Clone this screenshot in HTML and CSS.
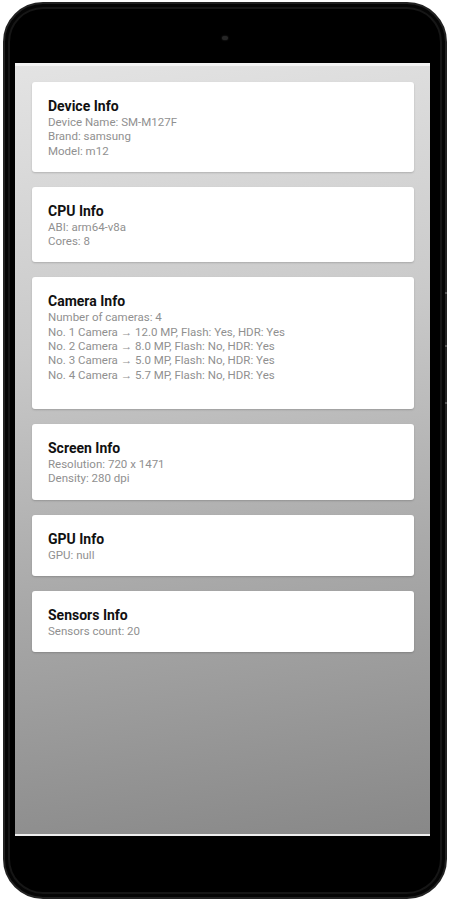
FILE: index.html
```html
<!DOCTYPE html>
<html>
<head>
<meta charset="utf-8">
<link rel="stylesheet" href="styles.css">
</head>
<body>
<div class="phone">
  <div class="bezel-top"><span class="camera"></span></div>
  <span class="btn btn-a"></span>
  <span class="btn btn-b"></span>
  <span class="btn btn-c"></span>
  <div class="screen">
    <div class="card">
      <div class="title">Device Info</div>
      <div class="line">Device Name: SM-M127F</div>
      <div class="line">Brand: samsung</div>
      <div class="line">Model: m12</div>
    </div>
    <div class="card">
      <div class="title">CPU Info</div>
      <div class="line">ABI: arm64-v8a</div>
      <div class="line">Cores: 8</div>
    </div>
    <div class="card card-tall">
      <div class="title">Camera Info</div>
      <div class="line">Number of cameras: 4</div>
      <div class="line">No. 1 Camera → 12.0 MP, Flash: Yes, HDR: Yes</div>
      <div class="line">No. 2 Camera → 8.0 MP, Flash: No, HDR: Yes</div>
      <div class="line">No. 3 Camera → 5.0 MP, Flash: No, HDR: Yes</div>
      <div class="line">No. 4 Camera → 5.7 MP, Flash: No, HDR: Yes</div>
    </div>
    <div class="card">
      <div class="title">Screen Info</div>
      <div class="line">Resolution: 720 x 1471</div>
      <div class="line">Density: 280 dpi</div>
    </div>
    <div class="card">
      <div class="title">GPU Info</div>
      <div class="line">GPU: null</div>
    </div>
    <div class="card">
      <div class="title">Sensors Info</div>
      <div class="line">Sensors count: 20</div>
    </div>
  </div>
</div>
</body>
</html>
```

FILE: styles.css
```css
html, body {
  margin: 0;
  padding: 0;
  background: #ffffff;
}
body {
  width: 450px;
  height: 900px;
  overflow: hidden;
  font-family: Roboto, "Noto Sans", sans-serif;
}
.phone {
  position: relative;
  box-sizing: border-box;
  margin: 2px 0 0 3px;
  width: 444px;
  height: 897px;
  background: #000;
  border-radius: 40px;
  border: 2px solid #222;
  box-shadow: inset 0 0 0 3px #050505, inset 0 0 0 5px #161616;
  padding: 0 14px 0 10px;
  display: flex;
  flex-direction: column;
}
.bezel-top {
  height: 59px;
  display: flex;
  justify-content: center;
  align-items: flex-start;
  padding-left: 4px;
}
.camera {
  margin-top: 32px;
  width: 6px;
  height: 4px;
  border-radius: 50%;
  background: #262626;
  box-shadow: 0 0 2px #333;
}
.btn {
  position: absolute;
  right: -2px;
  width: 2px;
  height: 2px;
  background: #555;
}
.btn-a { top: 288px; }
.btn-b { top: 341px; }
.btn-c { top: 398px; }
.screen {
  box-sizing: border-box;
  width: 415px;
  height: 773px;
  border-top: 3px solid #f3f3f3;
  border-bottom: 2px solid #eeeeee;
  background: linear-gradient(172deg, #e3e3e3 0%, #c9c9c9 35%, #a9a9a9 65%, #888888 100%);
  padding: 16px 16px 0 17px;
  display: flex;
  flex-direction: column;
  gap: 15px;
}
.card {
  background: #fff;
  border-radius: 3px;
  box-shadow: 0 1px 2px rgba(0, 0, 0, 0.18);
  padding: 15px 16px 14px 16px;
}
.card-tall {
  padding-bottom: 27px;
}
.title {
  font-size: 14px;
  line-height: 18px;
  font-weight: 700;
  color: #111;
}
.line {
  font-size: 11.5px;
  line-height: 14.3px;
  color: #909090;
}
```
